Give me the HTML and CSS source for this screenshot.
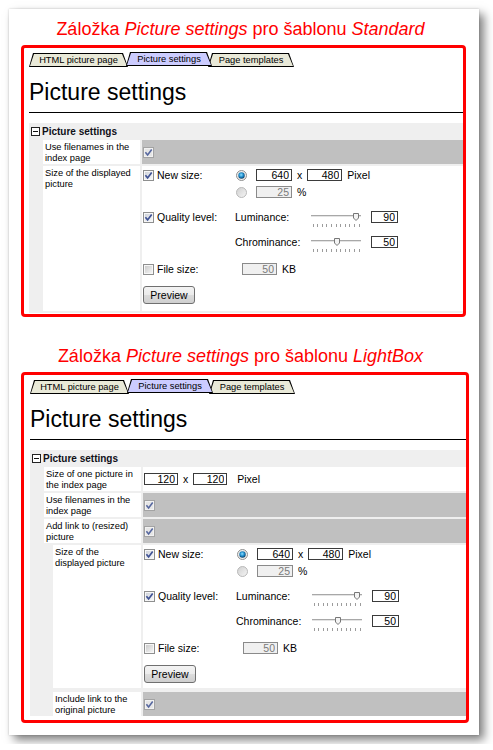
FILE: index.html
```html
<!DOCTYPE html>
<html lang="cs">
<head>
    <meta charset="UTF-8">
    <meta name="viewport" content="width=device-width, initial-scale=1.0">
    <title>Záložka Picture settings</title>
    <link rel="stylesheet" href="styles.css">
</head>
<body>

<!-- shared control glyphs -->
<svg class="defs" aria-hidden="true">
    <defs>
        <linearGradient id="cb-fill" x1="0" y1="0" x2="1" y2="1">
            <stop offset="0" stop-color="#cfd3da"/>
            <stop offset="1" stop-color="#f6f7f9"/>
        </linearGradient>
        <linearGradient id="cb-empty" x1="0" y1="0" x2="1" y2="1">
            <stop offset="0" stop-color="#cbcbcb"/>
            <stop offset="1" stop-color="#f4f4f4"/>
        </linearGradient>
        <radialGradient id="rb-dot" cx="0.45" cy="0.4" r="0.6">
            <stop offset="0" stop-color="#8fe0ff"/>
            <stop offset="0.55" stop-color="#1d8ccc"/>
            <stop offset="1" stop-color="#0b3f66"/>
        </radialGradient>
        <linearGradient id="rb-off" x1="0" y1="0" x2="1" y2="1">
            <stop offset="0" stop-color="#cfcfcf"/>
            <stop offset="1" stop-color="#f6f6f6"/>
        </linearGradient>
        <symbol id="cb-on" viewBox="0 0 11 11">
            <rect x="0.5" y="0.5" width="10" height="10" fill="#f7f7f7" stroke="#8e8f8f"/>
            <rect x="2" y="2" width="7" height="7" fill="url(#cb-fill)"/>
            <path d="M2.4 5.3 L4.6 7.9 L8.7 2.6" fill="none" stroke="#3f5294" stroke-width="1.7"/>
        </symbol>
        <symbol id="cb-dis" viewBox="0 0 11 11">
            <rect x="0.5" y="0.5" width="10" height="10" fill="#f2f2f2" stroke="#a3a3a3"/>
            <rect x="2" y="2" width="7" height="7" fill="#e6e6e6"/>
            <path d="M2.4 5.3 L4.6 7.9 L8.7 2.6" fill="none" stroke="#56679f" stroke-width="1.6"/>
        </symbol>
        <symbol id="cb-off" viewBox="0 0 11 11">
            <rect x="0.5" y="0.5" width="10" height="10" fill="#f7f7f7" stroke="#8e8f8f"/>
            <rect x="2" y="2" width="7" height="7" fill="url(#cb-empty)"/>
        </symbol>
        <symbol id="rb-on" viewBox="0 0 11 11">
            <circle cx="5.5" cy="5.5" r="5" fill="#eeeeee" stroke="#8e8f8f"/>
            <circle cx="5.5" cy="5.5" r="3.2" fill="url(#rb-dot)"/>
        </symbol>
        <symbol id="rb-dis" viewBox="0 0 11 11">
            <circle cx="5.5" cy="5.5" r="5" fill="url(#rb-off)" stroke="#b9b9b9"/>
        </symbol>
        <symbol id="track" viewBox="0 0 50 16">
            <rect x="0" y="4" width="50" height="1" fill="#a8a8a8"/>
            <rect x="0" y="5" width="50" height="1" fill="#e4e4e4"/>
            <path d="M2.5 13v3M6.5 13v3M11.5 13v3M15.5 13v3M20.5 13v3M25.5 13v3M29.5 13v3M34.5 13v3M38.5 13v3M43.5 13v3M48.5 13v3" stroke="#9c9c9c"/>
        </symbol>
        <symbol id="thumb" viewBox="0 0 6 8">
            <path d="M0.5 0.5 H5.5 V5 L3 7.5 L0.5 5 Z" fill="#f4f4f4" stroke="#777"/>
        </symbol>
        <symbol id="minus-box" viewBox="0 0 9 9">
            <rect x="0.5" y="0.5" width="8" height="8" fill="#fff" stroke="#222"/>
            <path d="M2 4.5 H7" stroke="#111"/>
        </symbol>
    </defs>
</svg>

<div class="sheet">

    <h2 class="caption">Záložka <i>Picture settings</i> pro šablonu <i>Standard</i></h2>

    <section class="frame">
        <div class="tabs">
            <span class="tab tab-first"><span>HTML picture page</span></span>
            <span class="tab active"><span>Picture settings</span></span>
            <span class="tab"><span>Page templates</span></span>
        </div>
        <h1 class="page-title">Picture settings</h1>

        <div class="props">
            <div class="props-head"><svg class="toggle"><use href="#minus-box"/></svg>Picture settings</div>
            <div class="props-grid">
                <div class="label">Use filenames in the index page</div>
                <div class="value off"><svg class="cb"><use href="#cb-dis"/></svg></div>

                <div class="label">Size of the displayed picture</div>
                <div class="value sizes">
                    <div class="opt">
                        <span class="opt-name"><svg class="cb"><use href="#cb-on"/></svg>New size:</span>
                        <svg class="radio"><use href="#rb-on"/></svg>
                        <input class="num w36" value="640" readonly>
                        <span class="unit times">x</span>
                        <input class="num w35" value="480" readonly>
                        <span class="unit">Pixel</span>
                    </div>
                    <div class="opt next">
                        <span class="opt-name"></span>
                        <svg class="radio"><use href="#rb-dis"/></svg>
                        <input class="num w36" value="25" disabled>
                        <span class="unit">%</span>
                    </div>
                    <div class="opt">
                        <span class="opt-name"><svg class="cb"><use href="#cb-on"/></svg>Quality level:</span>
                        <span class="channel">Luminance:</span>
                        <svg class="slider" viewBox="0 0 50 16"><use href="#track" width="50" height="16"/><use href="#thumb" x="42" y="2" width="6" height="8"/></svg>
                        <input class="num w27" value="90" readonly>
                    </div>
                    <div class="opt">
                        <span class="opt-name"></span>
                        <span class="channel">Chrominance:</span>
                        <svg class="slider" viewBox="0 0 50 16"><use href="#track" width="50" height="16"/><use href="#thumb" x="23" y="2" width="6" height="8"/></svg>
                        <input class="num w27" value="50" readonly>
                    </div>
                    <div class="opt file">
                        <span class="opt-name wide"><svg class="cb"><use href="#cb-off"/></svg>File size:</span>
                        <input class="num w35" value="50" disabled>
                        <span class="unit">KB</span>
                    </div>
                    <button class="btn">Preview</button>
                </div>
            </div>
        </div>
    </section>

    <h2 class="caption second">Záložka <i>Picture settings</i> pro šablonu <i>LightBox</i></h2>

    <section class="frame frame-lb">
        <div class="tabs">
            <span class="tab tab-first"><span>HTML picture page</span></span>
            <span class="tab active"><span>Picture settings</span></span>
            <span class="tab"><span>Page templates</span></span>
        </div>
        <h1 class="page-title">Picture settings</h1>

        <div class="props">
            <div class="props-head"><svg class="toggle"><use href="#minus-box"/></svg>Picture settings</div>
            <div class="props-grid">
                <div class="label">Size of one picture in the index page</div>
                <div class="value">
                    <input class="num w34" value="120" readonly>
                    <span class="unit times">x</span>
                    <input class="num w34" value="120" readonly>
                    <span class="unit far">Pixel</span>
                </div>

                <div class="label">Use filenames in the index page</div>
                <div class="value off"><svg class="cb"><use href="#cb-dis"/></svg></div>

                <div class="label">Add link to (resized) picture</div>
                <div class="value off"><svg class="cb"><use href="#cb-dis"/></svg></div>

                <div class="props-sub">
                    <div class="label">Size of the displayed picture</div>
                    <div class="value sizes">
                        <div class="opt">
                            <span class="opt-name"><svg class="cb"><use href="#cb-on"/></svg>New size:</span>
                            <svg class="radio"><use href="#rb-on"/></svg>
                            <input class="num w36" value="640" readonly>
                            <span class="unit times">x</span>
                            <input class="num w35" value="480" readonly>
                            <span class="unit">Pixel</span>
                        </div>
                        <div class="opt next">
                            <span class="opt-name"></span>
                            <svg class="radio"><use href="#rb-dis"/></svg>
                            <input class="num w36" value="25" disabled>
                            <span class="unit">%</span>
                        </div>
                        <div class="opt">
                            <span class="opt-name"><svg class="cb"><use href="#cb-on"/></svg>Quality level:</span>
                            <span class="channel">Luminance:</span>
                            <svg class="slider" viewBox="0 0 50 16"><use href="#track" width="50" height="16"/><use href="#thumb" x="42" y="2" width="6" height="8"/></svg>
                            <input class="num w27" value="90" readonly>
                        </div>
                        <div class="opt">
                            <span class="opt-name"></span>
                            <span class="channel">Chrominance:</span>
                            <svg class="slider" viewBox="0 0 50 16"><use href="#track" width="50" height="16"/><use href="#thumb" x="23" y="2" width="6" height="8"/></svg>
                            <input class="num w27" value="50" readonly>
                        </div>
                        <div class="opt file">
                            <span class="opt-name wide"><svg class="cb"><use href="#cb-off"/></svg>File size:</span>
                            <input class="num w35" value="50" disabled>
                            <span class="unit">KB</span>
                        </div>
                        <button class="btn">Preview</button>
                    </div>

                    <div class="label">Include link to the original picture</div>
                    <div class="value off"><svg class="cb"><use href="#cb-dis"/></svg></div>
                </div>
            </div>
        </div>
    </section>

</div>

</body>
</html>
```

FILE: styles.css
```css
body {
    margin: 0;
    background: #fff;
    font-family: "Liberation Sans", Arial, sans-serif;
    color: #000;
}

.defs {
    position: absolute;
    width: 0;
    height: 0;
    overflow: hidden;
}

.sheet {
    margin: 9px;
    width: 470px;
    padding: 9px 0 12px 12px;
    box-sizing: border-box;
    background: #fff;
    box-shadow: 5px 5px 9px rgba(0, 0, 0, 0.5), 0 0 2px rgba(0, 0, 0, 0.2);
}

.caption {
    width: 445px;
    margin: 0 0 5px;
    padding-right: 6px;
    box-sizing: border-box;
    font-size: 18px;
    line-height: 22px;
    font-weight: normal;
    color: #f00;
    text-align: center;
}

.caption.second {
    margin-top: 28px;
}

.frame {
    width: 445px;
    box-sizing: border-box;
    border: 3px solid #f00;
    border-radius: 4px;
    padding: 4px 0 1px 5px;
}

.frame-lb {
    width: 448px;
    padding: 4px 0 4px 6px;
}

/* tab strip */
.tabs {
    display: flex;
    align-items: flex-end;
    height: 15px;
}

.tab {
    position: relative;
    display: flex;
    justify-content: center;
    width: 86px;
    height: 14px;
    box-sizing: border-box;
    padding-top: 2px;
    margin-left: -4px;
    font-size: 9.3px;
    line-height: 10px;
    background: #000;
    clip-path: polygon(4px 0, calc(100% - 5px) 0, 100% 100%, 0 100%);
}

.tab::before {
    content: "";
    position: absolute;
    inset: 1px;
    background: #e9e9d8;
    clip-path: polygon(4px 0, calc(100% - 5px) 0, 100% 100%, 0 100%);
}

.tab span {
    position: relative;
}

.tab-first {
    width: 99px;
    margin-left: 0;
}

.tab.active {
    z-index: 2;
    margin-left: -2px;
    margin-bottom: 1px;
}

.tab.active::before {
    background: #ccccff;
}

.page-title {
    margin: 11px 0 0;
    padding-bottom: 6px;
    border-bottom: 1px solid #000;
    font-size: 23px;
    line-height: 28px;
    font-weight: normal;
}

/* property sheet */
.props {
    margin-top: 10px;
    padding-bottom: 2px;
    background: #efefef;
}

.frame-lb .props {
    padding-bottom: 0;
}

.props-head {
    display: flex;
    align-items: center;
    gap: 2px;
    height: 16px;
    padding-left: 2px;
    font-size: 10px;
    font-weight: bold;
    color: #101018;
}

.toggle {
    width: 9px;
    height: 9px;
}

.props-grid {
    display: grid;
    grid-template-columns: 97px 1fr;
    gap: 2px;
    margin-top: 1px;
    padding-left: 14px;
}

.props-sub {
    grid-column: 1 / -1;
    display: grid;
    grid-template-columns: 88px 1fr;
    column-gap: 2px;
    row-gap: 4px;
    padding-left: 9px;
}

.label {
    padding: 2px 2px 1px;
    background: #fff;
    font-size: 9.3px;
    line-height: 10.5px;
}

.value {
    display: flex;
    align-items: center;
    padding-left: 1px;
    background: #fff;
    font-size: 10.5px;
}

.value.off {
    background: #c0c0c0;
}

.sizes {
    display: block;
    padding: 3px 0 7px 1px;
}

.frame-lb .sizes {
    padding-bottom: 5px;
}

.opt {
    display: flex;
    align-items: center;
    height: 12px;
    margin-top: 13px;
}

.opt:first-child {
    margin-top: 0;
}

.opt.next {
    margin-top: 5px;
}

.opt.file {
    margin-top: 15px;
}

.opt-name {
    display: flex;
    align-items: center;
    gap: 3px;
    width: 93px;
    flex: none;
}

.opt-name.wide {
    width: 99px;
}

.cb,
.radio {
    width: 11px;
    height: 11px;
    flex: none;
}

.radio {
    margin-right: 9px;
}

.channel {
    width: 76px;
    margin-left: -1px;
    flex: none;
}

.slider {
    align-self: flex-start;
    width: 50px;
    height: 16px;
    margin-right: 10px;
    flex: none;
}

.num {
    height: 12px;
    box-sizing: border-box;
    border: 1px solid #3b3b3b;
    padding: 0 2px 0 0;
    margin: 0;
    background: #fff;
    color: #000;
    font-family: "Liberation Sans", Arial, sans-serif;
    font-size: 10.5px;
    line-height: 10px;
    text-align: right;
    outline: none;
}

.num:disabled {
    background: #f0f0f0;
    border-color: #8a8a8a;
    color: #7a7a7a;
}

.w27 { width: 27px; }
.w34 { width: 34px; }
.w35 { width: 35px; }
.w36 { width: 36px; }

.unit {
    margin-left: 5px;
}

.unit.times {
    margin-right: 5px;
}

.unit.far {
    margin-left: 10px;
}

.btn {
    display: block;
    width: 52px;
    height: 18px;
    margin-top: 11px;
    padding: 0;
    border: 1px solid #707070;
    border-radius: 3px;
    background: linear-gradient(#f3f3f3 0%, #ebebeb 50%, #dcdcdc 51%, #cfcfcf 100%);
    font-family: "Liberation Sans", Arial, sans-serif;
    font-size: 10.5px;
    color: #000;
}
```
